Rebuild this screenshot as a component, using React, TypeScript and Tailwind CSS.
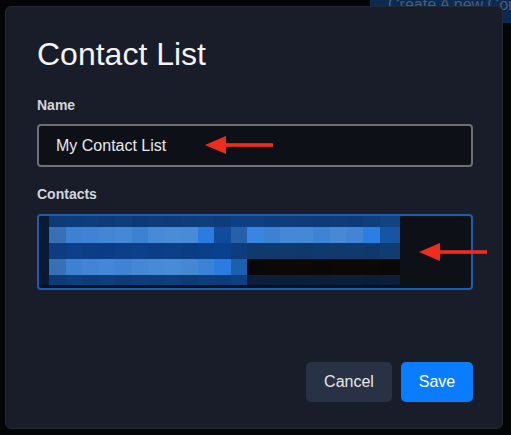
import React from 'react';

// column widths and row heights of the blurred (pixelated) contacts block
const colWidths = [9, 17, 16, 17, 16, 17, 16, 17, 16, 17, 16, 17, 16, 17, 16, 17, 16, 17, 16, 17, 17, 20];

const mosaic: { h: number; colors: string[] }[] = [
  {
    h: 11,
    colors: [
      '#0a1a33', '#0f3b75', '#0d3c7c', '#0e3d7e', '#0d3b78', '#0e3d7c', '#0d3a76', '#0e3c7a', '#0d3b78', '#0e3d7c', '#0f3e7e',
      '#0e3c7a', '#0e3f82', '#0f3f80', '#0d3c7c', '#0e3d7c', '#0e3c7a', '#0d3b78', '#0e3c7a', '#0d3b78', '#0f3e7e', '#12427f',
    ],
  },
  {
    h: 16,
    colors: [
      '#0a1a33', '#3670b5', '#3d82d2', '#3f84d4', '#4287d6', '#4489d6', '#3a82d2', '#468bd6', '#498dd7', '#488cd6', '#2b7ce0',
      '#0f4d9c', '#2660aa', '#3787e2', '#3b82d2', '#4489d8', '#4489d6', '#3e84d4', '#468ad6', '#4086d4', '#2b7ee2', '#1456a4',
    ],
  },
  {
    h: 16,
    colors: [
      '#0a1a33', '#0d3c80', '#0c4089', '#0b3e86', '#0a3d85', '#0b3f87', '#0c408a', '#0b3e86', '#0b3f87', '#0a3d84', '#0a4088',
      '#0a418c', '#0d3d7c', '#10396c', '#0f3a6d', '#103a6c', '#0f396b', '#0f3a6e', '#10396c', '#0f3a6d', '#0f396b', '#113c70',
    ],
  },
  {
    h: 16,
    colors: [
      '#0a1a33', '#3670b5', '#3d82d2', '#4086d4', '#4288d6', '#3f84d2', '#4388d4', '#468bd6', '#478cd6', '#4488d4', '#3a84d8',
      '#2b7ce0', '#1a60b0', '#090808', '#0b0806', '#0c0805', '#0b0806', '#0a0807', '#0b0806', '#0c0805', '#0b0806', '#0a0807',
    ],
  },
  {
    h: 10,
    colors: [
      '#0a1a33', '#0d3b78', '#0e3e7e', '#0d3c7a', '#0e3e7e', '#0d3b78', '#0e3d7c', '#0d3c7a', '#0e3e7e', '#0d3b78', '#0e3d7c',
      '#0d3c7a', '#0f3f80', '#0c1f3a', '#0c1f3a', '#0b1e38', '#0c1f3a', '#0b1e38', '#0c1f3a', '#0c1f3a', '#0b1e38', '#0c1f3a',
    ],
  },
];

const Arrow = ({ className }: { className: string }) => (
  <svg className={className} width="68" height="22" viewBox="0 0 68 22">
    <polygon points="0,11 21,2 21,20" fill="#ee2d1e" />
    <rect x="19" y="9.2" width="49" height="3.6" fill="#ee2d1e" />
  </svg>
);

const App = () => {
  return (
    <div
      className="relative w-[511px] h-[435px] overflow-hidden bg-[#040507]"
      style={{ fontFamily: '"Liberation Sans", Arial, sans-serif' }}
    >
      {/* page button behind the dimmed overlay */}
      <div className="absolute right-0 top-0 w-[141px] h-[26px] bg-[#0b2a52] pl-[18px] -mt-[3px] overflow-hidden">
        <span className="block text-[16px] leading-[16px] text-[#4d5c70] whitespace-nowrap">Create A new Contact</span>
      </div>

      {/* Modal */}
      <div className="absolute left-[5px] top-[6px] w-[498px] h-[423px] flex flex-col rounded-[6px] border border-[#222834] bg-[#181d29] pl-[31px] pr-[29px] pt-[28px] pb-[26px]">
        <h2 className="text-[32px] leading-[38px] text-[#f2f3f5]">Contact List</h2>

        <label className="mt-[22px] text-[14px] leading-[20px] font-bold text-[#d3d6db]">Name</label>
        <div className="mt-[9px] h-[43px] flex items-center rounded-[4px] border-2 border-[#6e7076] bg-[#0d1017] pl-[17px] text-[16px] text-[#e8e9ec]">
          My Contact List
        </div>

        <label className="mt-[17px] text-[14px] leading-[20px] font-bold text-[#d3d6db]">Contacts</label>
        <div className="mt-[10px] h-[76px] rounded-[4px] border-2 border-[#1a5eb3] bg-[#0d1017] pl-[1px]">
          <div className="flex flex-col">
            {mosaic.map((row, r) => (
              <div key={r} className="flex">
                {row.colors.map((c, i) => (
                  <div key={i} style={{ width: colWidths[i], height: row.h, backgroundColor: c }} />
                ))}
              </div>
            ))}
          </div>
        </div>

        <div className="flex-1" />

        <div className="flex justify-end gap-[9px]">
          <button className="h-[40px] w-[86px] rounded-[5px] bg-[#283244] text-[16px] text-[#e6e8eb]">Cancel</button>
          <button className="h-[40px] w-[72px] rounded-[5px] bg-[#0a7cff] text-[16px] text-white">Save</button>
        </div>
      </div>

      {/* annotation arrows */}
      <Arrow className="absolute left-[205px] top-[134px]" />
      <Arrow className="absolute left-[419px] top-[241px]" />
    </div>
  );
};

export default App;
